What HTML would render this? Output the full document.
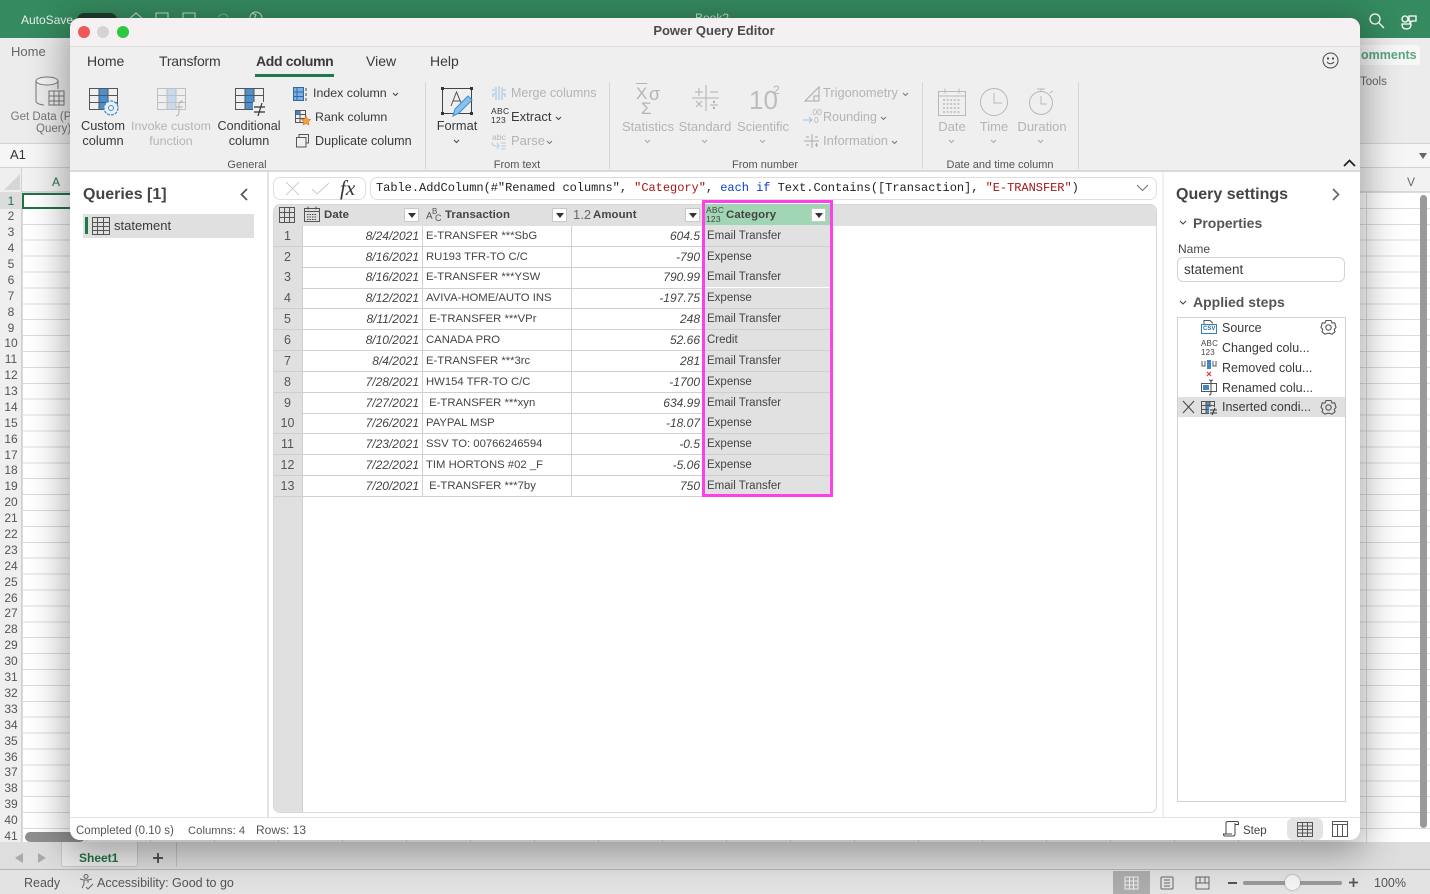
<!DOCTYPE html>
<html><head><meta charset="utf-8"><title>Power Query Editor</title>
<style>
*{box-sizing:border-box;margin:0;padding:0}
html,body{width:1430px;height:894px;overflow:hidden;background:#fff;font-family:"Liberation Sans",sans-serif;color:#333}
body{filter:blur(.3px)}
.a{position:absolute}
.t{position:absolute;white-space:nowrap;line-height:16px;font-size:13px;color:#3a3a3a}
.c{text-align:center;transform:translateX(-50%)}
.dis{color:#b4b4b4}
svg{position:absolute;overflow:visible;fill:none}
.rn{position:absolute;left:0;width:22px;text-align:center;font-size:12px;line-height:16px;color:#555}
#grid{position:absolute;left:22px;top:192px;right:0;height:650px;background-color:#fff;background-image:repeating-linear-gradient(to bottom,#dcdcdc 0,#dcdcdc 1px,transparent 1px,transparent 15.9px),repeating-linear-gradient(to right,#dcdcdc 0,#dcdcdc 1px,transparent 1px,transparent 64px)}
#win{position:absolute;left:70px;top:18px;width:1290px;height:822px;background:#fff;border-radius:10px;box-shadow:0 8px 36px 6px rgba(0,0,0,.32);overflow:hidden}
#tb{position:absolute;left:273px;top:204px;width:884px;height:609px;border:1px solid #d8d8d8;border-radius:7px;background:#fff;overflow:hidden}
.row{position:absolute;left:0;width:558px;height:20.85px;font-size:11.3px;line-height:20px;color:#444;border-bottom:1px solid #cfcfcf}
.row span{position:absolute;top:-.25px;height:20px;white-space:nowrap}
.i{left:0;width:27px;text-align:center;background:#e0e0e0;color:#555;font-size:12.5px}
.d{left:28px;width:117px;text-align:right;font-style:italic;font-size:12px}
.tr{left:152px}
.am{left:298px;width:128px;text-align:right;font-style:italic;font-size:12px}
.ca{left:429px;width:129px;background:#e1e1e1;padding-left:4px;font-size:11.5px}
.vl{position:absolute;top:21px;bottom:0;width:1px;background:#d2d2d2}
.dd{position:absolute;top:208px;width:15px;height:14px;background:#fff;border:1px solid #c9c9c9}
.dd:after{content:"";position:absolute;left:3px;top:4px;border:4px solid transparent;border-top:5px solid #333;border-bottom:0}
.h{font-size:11.4px;font-weight:bold;color:#444;letter-spacing:.1px}
</style></head><body>

<!-- Excel background -->
<div class="a" style="left:0;top:0;width:1430px;height:38px;background:#358a5f"></div>
<div class="t" style="left:21px;top:12px;color:#e6f2ea;font-size:12px">AutoSave</div>
<div class="a" style="left:77px;top:13px;width:40px;height:14px;background:#1f3d2d;border-radius:7px"></div>
<svg style="left:128px;top:10px" width="140" height="14" stroke="#bfe0cd" stroke-width="1.1"><path d="M1 9L8 3l7 6M3 8v6M13 8v6M28 3h12v11H28zM55 3h12v11H55z"/><path d="M90 7q6-6 10 0" opacity=".5"/><path d="M122 9a6 6 0 1 1 6 5M124 3l4 2-2 4"/></svg>
<div class="t" style="left:695px;top:10px;color:#c6e0d0;font-size:12px">Book2</div>
<svg style="left:1368px;top:12px" width="50" height="18" stroke="#fff" stroke-width="1.3"><circle cx="7" cy="7" r="5"/><path d="M11 11l5 5"/><path d="M34 12h9q0 5-4.500 5t-4.500-5z"/><circle cx="37" cy="7" r="3"/><path d="M41 4h7v5h-4l-2 2v-2h-1z"/></svg>

<div class="a" style="left:0;top:38px;width:1430px;height:107px;background:#ececec"></div>
<div class="t" style="left:11px;top:44px;font-size:13px;color:#666">Home</div>
<svg style="left:35px;top:76px" width="34" height="32" stroke="#777"><ellipse cx="12" cy="5" rx="11" ry="4" fill="#f4f4f4"/><path d="M1 5v20q0 3 8 4M23 5v8"/><rect x="14" y="15" width="15" height="14" fill="#eee"/><path d="M14 20h15M14 25h15M19 15v14M24 15v14"/></svg>
<div class="t c" style="left:41px;top:109px;font-size:11.500px;color:#777">Get Data (P</div>
<div class="t" style="left:36px;top:121px;font-size:11.500px;color:#777">Query)</div>
<div class="a" style="left:1358px;top:45px;width:62px;height:20px;background:#f7f7f7;border-radius:3px"></div>
<div class="t" style="left:1361px;top:47px;font-size:12.500px;font-weight:bold;color:#5ba57f">omments</div>
<div class="t" style="left:1360px;top:74px;font-size:11.500px;color:#666">Tools</div>
<div class="a" style="left:0;top:143px;width:1430px;height:25px;background:#f6f6f6;border-top:1px solid #d4d4d4;border-bottom:1px solid #d4d4d4"></div>
<div class="t" style="left:10px;top:147px;font-size:13px;color:#333">A1</div>
<div class="a" style="left:1419px;top:153px;border:4px solid transparent;border-top:6px solid #666"></div>

<div class="a" style="left:0;top:168px;width:1430px;height:24px;background:#f2f2f2;border-bottom:1px solid #d8d8d8"></div>
<div class="a" style="left:0;top:168px;width:22px;height:676px;background:#efefef;border-right:1px solid #d0d0d0"></div>
<svg style="left:4px;top:174px" width="16" height="16"><path d="M16 0v16H0z" fill="#d6d6d6"/></svg>
<div class="t" style="left:52px;top:174px;font-size:12px;color:#217346">A</div>
<div class="t" style="left:1407px;top:174px;font-size:12px;color:#666">V</div>
<div id="grid"></div>
<div class="a" style="left:22px;top:193px;width:50px;height:16px;border:2px solid #217346;background:#fff"></div>
<div class="a" style="left:0;top:192px;width:22px;height:17px;background:#dcdcdc"></div>
<div class="rn" style="top:193px;color:#217346">1</div><div class="rn" style="top:208px">2</div><div class="rn" style="top:224px">3</div><div class="rn" style="top:240px">4</div><div class="rn" style="top:256px">5</div><div class="rn" style="top:272px">6</div><div class="rn" style="top:288px">7</div><div class="rn" style="top:304px">8</div><div class="rn" style="top:320px">9</div><div class="rn" style="top:335px">10</div><div class="rn" style="top:351px">11</div><div class="rn" style="top:367px">12</div><div class="rn" style="top:383px">13</div><div class="rn" style="top:399px">14</div><div class="rn" style="top:415px">15</div><div class="rn" style="top:431px">16</div><div class="rn" style="top:447px">17</div><div class="rn" style="top:462px">18</div><div class="rn" style="top:478px">19</div><div class="rn" style="top:494px">20</div><div class="rn" style="top:510px">21</div><div class="rn" style="top:526px">22</div><div class="rn" style="top:542px">23</div><div class="rn" style="top:558px">24</div><div class="rn" style="top:574px">25</div><div class="rn" style="top:590px">26</div><div class="rn" style="top:605px">27</div><div class="rn" style="top:621px">28</div><div class="rn" style="top:637px">29</div><div class="rn" style="top:653px">30</div><div class="rn" style="top:669px">31</div><div class="rn" style="top:685px">32</div><div class="rn" style="top:701px">33</div><div class="rn" style="top:717px">34</div><div class="rn" style="top:733px">35</div><div class="rn" style="top:749px">36</div><div class="rn" style="top:764px">37</div><div class="rn" style="top:780px">38</div><div class="rn" style="top:796px">39</div><div class="rn" style="top:812px">40</div><div class="rn" style="top:828px">41</div>
<div class="a" style="left:25px;top:832px;width:60px;height:10px;background:#8f8f8f;border-radius:5px"></div>
<div class="a" style="left:1420px;top:195px;width:7px;height:633px;background:#9a9a9a;border-radius:4px"></div>

<div class="a" style="left:0;top:842px;width:1430px;height:28px;background:#dedede;border-bottom:1px solid #b5b5b5"></div>
<svg style="left:14px;top:852px" width="34" height="12"><path d="M9 1v10L1 6z" fill="#aaa"/><path d="M24 1v10l8-5z" fill="#aaa"/></svg>
<div class="a" style="left:61px;top:842px;width:77px;height:25px;background:#ececec;border:1px solid #c8c8c8;border-top:0;border-radius:0 0 3px 3px"></div>
<div class="t" style="left:79px;top:850px;font-size:12px;font-weight:bold;color:#217346">Sheet1</div>
<svg style="left:152px;top:852px" width="12" height="12" stroke="#444" stroke-width="1.700"><path d="M6 1v10M1 6h10"/></svg>
<div class="a" style="left:176px;top:842px;width:1px;height:25px;background:#c0c0c0"></div>
<div class="a" style="left:0;top:870px;width:1430px;height:24px;background:#e3e3e3"></div>
<div class="t" style="left:24px;top:875px;font-size:12.500px;color:#555">Ready</div>
<svg style="left:79px;top:874px" width="15" height="16" stroke="#666" stroke-width="1"><circle cx="7" cy="2.500" r="2"/><path d="M1 5l4 1h4l4-1M5 6v4l-2 4M9 6v3M7 13l2 2 5-5"/></svg>
<div class="t" style="left:97px;top:875px;font-size:12.500px;color:#555">Accessibility: Good to go</div>
<div class="a" style="left:1113px;top:871px;width:37px;height:23px;background:#adadad"></div>
<svg style="left:1125px;top:876px" width="100" height="14" stroke="#666" stroke-width="1"><path d="M0 1h13v12H0zM0 5h13M0 9h13M4.500 1v12M8.500 1v12" stroke="#eee"/><rect x="36" y="1" width="12" height="12" rx="1"/><path d="M39 4h6M39 7h6M39 10h6"/><path d="M71 1h13v12H71zM75 1v6h5V1M71 7h4M80 7h4"/></svg>
<div class="a" style="left:1228px;top:882px;width:9px;height:2px;background:#555"></div>
<div class="a" style="left:1243px;top:881px;width:99px;height:4px;background:#999;border-radius:2px"></div>
<div class="a" style="left:1285px;top:875px;width:15px;height:15px;background:#f5f5f5;border-radius:50%;box-shadow:0 0 2px #888"></div>
<svg style="left:1349px;top:878px" width="9" height="9" stroke="#555" stroke-width="1.700"><path d="M4.500 0v9M0 4.500h9"/></svg>
<div class="t" style="left:1374px;top:875px;font-size:12.500px;color:#555">100%</div>

<!-- Power Query window -->
<div id="win"></div>
<div class="a" style="left:70px;top:18px;width:1290px;height:29px;background:#f5f1f2;border-radius:10px 10px 0 0;border-bottom:1px solid #dcdcdc"></div>
<div class="a" style="left:78px;top:26px;width:12px;height:12px;border-radius:50%;background:#f0575a"></div>
<div class="a" style="left:97px;top:26px;width:12px;height:12px;border-radius:50%;background:#d6d2d3"></div>
<div class="a" style="left:117px;top:26px;width:12px;height:12px;border-radius:50%;background:#2cc840"></div>
<div class="t c" style="left:714px;top:23px;font-size:13px;font-weight:bold;color:#4a4a4a">Power Query Editor</div>
<div class="a" style="left:70px;top:47px;width:1290px;height:125px;background:#efefef;border-bottom:2px solid #dadada"></div>

<div class="t" style="left:87px;top:53px;font-size:14px">Home</div>
<div class="t" style="left:159px;top:53px;font-size:14px;letter-spacing:-.2px">Transform</div>
<div class="t" style="left:256px;top:53px;font-size:14px;font-weight:bold;letter-spacing:-.35px">Add column</div>
<div class="a" style="left:255px;top:74px;width:79px;height:3px;background:#1e7a4b"></div>
<div class="t" style="left:366px;top:53px;font-size:14px">View</div>
<div class="t" style="left:430px;top:53px;font-size:14px">Help</div>
<svg style="left:1322px;top:52px" width="17" height="17" stroke="#444"><circle cx="8.500" cy="8.500" r="7.500"/><path d="M5 10q3.500 3.500 7 0"/><circle cx="6" cy="6.500" r=".6" fill="#444"/><circle cx="11" cy="6.500" r=".6" fill="#444"/></svg>

<!-- separators -->
<div class="a" style="left:425px;top:82px;width:1px;height:87px;background:#d6d6d6"></div>
<div class="a" style="left:609px;top:82px;width:1px;height:87px;background:#d6d6d6"></div>
<div class="a" style="left:922px;top:82px;width:1px;height:87px;background:#d6d6d6"></div>
<div class="a" style="left:1078px;top:82px;width:1px;height:87px;background:#d6d6d6"></div>

<!-- Custom column icon -->
<svg style="left:89px;top:88px" width="32" height="28"><rect x="10" y="0" width="9" height="22" fill="#4a8fd0"/><path d="M.5.500h28v21H.5zM.5 7.500h28M.5 14.500h28M10 .5v21M19 .5v21" stroke="#555"/><circle cx="22" cy="20" r="7" fill="#efefef" stroke="#3b93d8" stroke-width="1.300" stroke-dasharray="3 1"/><circle cx="22" cy="20" r="2.500" stroke="#3b93d8"/></svg>
<div class="t c" style="left:103px;top:118px;font-size:12.800px">Custom</div><div class="t c" style="left:103px;top:133px;font-size:12.800px">column</div>
<!-- Invoke -->
<svg style="left:157px;top:88px" width="32" height="28"><rect x="10" y="0" width="9" height="22" fill="#c7d9ec"/><path d="M.5.500h28v21H.5zM.5 7.500h28M.5 14.500h28M10 .5v21M19 .5v21" stroke="#c0c0c0"/><path d="M19 28q3 0 3-5v-6q0-4 4-4M19 19h7" stroke="#b0b0b0"/></svg>
<div class="t c dis" style="left:171px;top:118px;font-size:12.400px">Invoke custom</div><div class="t c dis" style="left:171px;top:133px;font-size:12.400px">function</div>
<!-- Conditional -->
<svg style="left:235px;top:88px" width="32" height="28"><rect x="10" y="0" width="9" height="22" fill="#4a8fd0"/><path d="M.5.500h28v21H.5zM.5 7.500h28M.5 14.500h28M10 .5v21M19 .5v21" stroke="#555"/><rect x="18" y="14" width="14" height="13" fill="#efefef"/><path d="M19 19h11M19 24h11M27 15l-4 13" stroke="#333" stroke-width="1.200"/></svg>
<div class="t c" style="left:249px;top:118px;font-size:12.600px">Conditional</div><div class="t c" style="left:249px;top:133px;font-size:12.600px">column</div>
<div class="t c" style="left:247px;top:157px;font-size:11px;color:#555">General</div>

<svg style="left:293px;top:86px" width="15" height="16"><rect x=".5" y="1.500" width="10" height="13" fill="#7eb0de" stroke="#2d6aa5"/><path d="M4 1.500v13M.5 6h10M.5 10.500h10" stroke="#2d6aa5"/><path d="M13 2v3M13 7v3M13 12v3" stroke="#444"/></svg>
<div class="t" style="left:313px;top:85px;font-size:12.400px">Index column</div>
<svg style="left:392px;top:92px" width="7" height="5" stroke="#444"><path d="M1 1l2.500 2.500L6 1"/></svg>
<svg style="left:295px;top:110px" width="16" height="16"><path d="M.5.500h10v12H.5zM.5 4.500h10M.5 8.500h10M5 .5v12" stroke="#555"/><rect x="1" y="1" width="4" height="3.500" fill="#3f86c8"/><path d="M11 6l1.500 3 3 .5-2.200 2.200.6 3.300L11 13.500 8.100 15l.6-3.300L6.500 9.500l3-.5z" fill="#f2a241" stroke="#d8721e" stroke-width=".6"/></svg>
<div class="t" style="left:315px;top:109px;font-size:12.400px">Rank column</div>
<svg style="left:296px;top:134px" width="15" height="14" stroke="#555"><path d="M3 3V.5h9.500V9H10"/><rect x=".5" y="3.500" width="9.500" height="9.500"/></svg>
<div class="t" style="left:315px;top:133px;font-size:12.600px">Duplicate column</div>

<!-- Format -->
<svg style="left:441px;top:87px" width="34" height="30"><path d="M1.500 1.500h29v25h-29z" stroke="#444"/><rect x="0" y="0" width="3" height="3" fill="#333"/><rect x="29" y="0" width="3" height="3" fill="#333"/><rect x="0" y="25" width="3" height="3" fill="#333"/><rect x="29" y="25" width="3" height="3" fill="#333"/><path d="M10 19l5.500-14 5 12M12 14h7" stroke="#555"/><path d="M12 29l2-7L27 9l4 4-13 13z" fill="#8cc1ec" stroke="#3b8ed0"/></svg>
<div class="t c" style="left:457px;top:118px;font-size:12.800px">Format</div>
<svg style="left:453px;top:139px" width="7" height="5" stroke="#444"><path d="M1 1l2.500 2.500L6 1"/></svg>

<svg style="left:491px;top:85px" width="16" height="16" stroke="#9dbfdc"><path d="M5 2v13M8 1v14M11 2v13M1 5h3M15 5h-3M2 12V9h2M14 12V9h-2"/></svg>
<div class="t dis" style="left:511px;top:85px;font-size:12.500px">Merge columns</div>
<div class="t" style="left:491px;top:107px;font-size:8.500px;line-height:9px;color:#333;letter-spacing:.3px">ABC<br>123</div>
<div class="t" style="left:511px;top:109px;font-size:13px">Extract</div>
<svg style="left:555px;top:116px" width="7" height="5" stroke="#444"><path d="M1 1l2.500 2.500L6 1"/></svg>
<div class="t dis" style="left:492px;top:133px;font-size:8.500px;line-height:9px">abc</div>
<svg style="left:491px;top:141px" width="16" height="9" stroke="#b5cfe4"><path d="M1 1q0 4 4 4h3M6 2l2 3-2 3M10 2h5M10 5h5M10 8h5"/></svg>
<div class="t dis" style="left:511px;top:133px;font-size:13px">Parse</div>
<svg style="left:546px;top:140px" width="7" height="5" stroke="#777"><path d="M1 1l2.500 2.500L6 1"/></svg>
<div class="t c" style="left:517px;top:157px;font-size:11px;color:#555">From text</div>

<!-- Statistics -->
<div class="t" style="left:636px;top:85px;font-size:17px;line-height:18px;color:#b4b4b4;text-decoration:overline">X</div>
<div class="t" style="left:649px;top:85px;font-size:18px;line-height:18px;color:#b4b4b4">σ</div>
<div class="t" style="left:641px;top:100px;font-size:17px;line-height:18px;color:#b4b4b4">Σ</div>
<div class="t c dis" style="left:648px;top:119px">Statistics</div>
<svg style="left:644px;top:139px" width="7" height="5" stroke="#aaa"><path d="M1 1l2.500 2.500L6 1"/></svg>
<svg style="left:692px;top:85px" width="28" height="28" stroke="#b0b0b0"><path d="M14 0v26M0 13h27M3 7h8M7 3v8M18 7h8M4 16l6 6M10 16l-6 6M18 20h8"/><circle cx="22" cy="17" r=".7" fill="#aaa"/><circle cx="22" cy="23" r=".7" fill="#aaa"/></svg>
<div class="t c dis" style="left:705px;top:119px">Standard</div>
<svg style="left:701px;top:139px" width="7" height="5" stroke="#aaa"><path d="M1 1l2.500 2.500L6 1"/></svg>
<div class="t" style="left:749px;top:86px;font-size:26px;line-height:28px;color:#bdbdbd">10</div>
<div class="t" style="left:773px;top:82px;font-size:12px;color:#b4b4b4">2</div>
<div class="t c dis" style="left:763px;top:119px">Scientific</div>
<svg style="left:759px;top:139px" width="7" height="5" stroke="#aaa"><path d="M1 1l2.500 2.500L6 1"/></svg>
<svg style="left:804px;top:86px" width="16" height="16" stroke="#aaa"><path d="M1 15L15 1v14zM10 15v-5h5"/></svg>
<div class="t dis" style="left:823px;top:85px;font-size:12.800px">Trigonometry</div>
<svg style="left:902px;top:92px" width="7" height="5" stroke="#777"><path d="M1 1l2.500 2.500L6 1"/></svg>
<div class="t" style="left:810px;top:108px;font-size:8.500px;line-height:9px;color:#b4b4b4">.00</div>
<svg style="left:803px;top:116px" width="10" height="8" stroke="#9dc3e4"><path d="M0 4h9M6 1l3 3-3 3"/></svg>
<div class="t" style="left:814px;top:116px;font-size:8.500px;line-height:9px;color:#b4b4b4">0</div>
<div class="t dis" style="left:823px;top:109px;font-size:12.600px">Rounding</div>
<svg style="left:880px;top:116px" width="7" height="5" stroke="#777"><path d="M1 1l2.500 2.500L6 1"/></svg>
<svg style="left:804px;top:134px" width="15" height="14" stroke="#aaa"><path d="M8 0v14M0 7h15M2 3h3M2 11h3M11 3h3M11 11h3M12.500 9v4"/></svg>
<div class="t dis" style="left:823px;top:133px;font-size:13px">Information</div>
<svg style="left:891px;top:140px" width="7" height="5" stroke="#777"><path d="M1 1l2.500 2.500L6 1"/></svg>
<div class="t c" style="left:765px;top:157px;font-size:11px;color:#555">From number</div>

<!-- Date/time -->
<svg style="left:938px;top:88px" width="28" height="28" stroke="#b8b8b8"><rect x=".5" y="3.500" width="27" height="24"/><path d="M.5 8h27M7 .5v5M21 .5v5"/><path d="M5 12h18M5 16h18M5 20h18M5 24h18" stroke-dasharray="2 1.600" stroke-width="1.400"/></svg>
<div class="t c dis" style="left:952px;top:119px">Date</div>
<svg style="left:948px;top:139px" width="7" height="5" stroke="#aaa"><path d="M1 1l2.500 2.500L6 1"/></svg>
<svg style="left:980px;top:88px" width="28" height="28" stroke="#b8b8b8"><circle cx="14" cy="14" r="13.500"/><path d="M14 5v10h8"/></svg>
<div class="t c dis" style="left:994px;top:119px">Time</div>
<svg style="left:990px;top:139px" width="7" height="5" stroke="#aaa"><path d="M1 1l2.500 2.500L6 1"/></svg>
<svg style="left:1029px;top:88px" width="26" height="28" stroke="#b8b8b8"><circle cx="12" cy="15" r="11.500"/><path d="M8 1h8M12 1v3M12 8v8h6M21 5l3-2"/></svg>
<div class="t c dis" style="left:1042px;top:119px">Duration</div>
<svg style="left:1037px;top:139px" width="7" height="5" stroke="#aaa"><path d="M1 1l2.500 2.500L6 1"/></svg>
<div class="t c" style="left:1000px;top:157px;font-size:11px;color:#555">Date and time column</div>
<svg style="left:1343px;top:159px" width="13" height="8" stroke="#222" stroke-width="1.800"><path d="M1 7l5.500-5.500L12 7"/></svg>

<!-- Queries pane -->
<div class="a" style="left:267px;top:172px;width:2px;height:645px;background:#e4e4e4"></div>
<div class="t" style="left:83px;top:186px;font-size:16px;line-height:18px;font-weight:bold;color:#444">Queries [1]</div>
<svg style="left:240px;top:188px" width="8" height="13" stroke="#555" stroke-width="1.700"><path d="M7 1L1.500 6.500 7 12"/></svg>
<div class="a" style="left:83px;top:214px;width:171px;height:24px;background:#e0e0e0"></div>
<div class="a" style="left:85px;top:217px;width:3px;height:17px;background:#1e7a4b"></div>
<svg style="left:92px;top:217px" width="18" height="18" stroke="#555"><path d="M.5.500h17v17H.5zM.5 5.500h17M.5 9.500h17M.5 13.500h17M5.500 .5v17M11.500 .5v17"/></svg>
<div class="t" style="left:114px;top:218px;font-size:13px">statement</div>

<!-- Formula bar -->
<div class="a" style="left:273px;top:177px;width:93px;height:23px;border:1px solid #dedede;border-radius:7px;background:#fff"></div>
<svg style="left:285px;top:181px" width="46" height="14" stroke="#cfcfcf" stroke-width="1.100"><path d="M1 1l13 13M14 1L1 14M27 8l5 5 12-11"/></svg>
<div class="t" style="left:340px;top:179px;font-family:'Liberation Serif',serif;font-style:italic;font-size:21px;line-height:18px;color:#333">fx</div>
<div class="a" style="left:370px;top:177px;width:787px;height:23px;border:1px solid #dedede;border-radius:7px;background:#fff"></div>
<div class="t" style="left:376px;top:180px;font-family:'Liberation Mono',monospace;font-size:12px;color:#222;letter-spacing:-.03px">Table.AddColumn(#"Renamed columns", <span style="color:#a31515">"Category"</span>, <span style="color:#0b3fd6">each</span> <span style="color:#0b3fd6">if</span> Text.Contains([Transaction], <span style="color:#a31515">"E-TRANSFER"</span>)</div>
<svg style="left:1136px;top:184px" width="13" height="8" stroke="#777" stroke-width="1.100"><path d="M1 1l5.500 5.500L12 1"/></svg>

<!-- Table -->
<div id="tb">
<div class="a" style="left:0;top:0;width:884px;height:21px;background:#e0e0e0"></div>
<div class="a" style="left:0;top:21px;width:28px;height:587px;background:#e0e0e0"></div>
<div class="row" style="top:21px"><span class="i">1</span><span class="d">8/24/2021</span><span class="tr">E-TRANSFER ***SbG</span><span class="am">604.5</span><span class="ca">Email Transfer</span></div>
<div class="row" style="top:41.850px"><span class="i">2</span><span class="d">8/16/2021</span><span class="tr">RU193 TFR-TO C/C</span><span class="am">-790</span><span class="ca">Expense</span></div>
<div class="row" style="top:62.700px"><span class="i">3</span><span class="d">8/16/2021</span><span class="tr">E-TRANSFER ***YSW</span><span class="am">790.99</span><span class="ca">Email Transfer</span></div>
<div class="row" style="top:83.550px"><span class="i">4</span><span class="d">8/12/2021</span><span class="tr">AVIVA-HOME/AUTO INS</span><span class="am">-197.75</span><span class="ca">Expense</span></div>
<div class="row" style="top:104.400px"><span class="i">5</span><span class="d">8/11/2021</span><span class="tr">&nbsp;E-TRANSFER ***VPr</span><span class="am">248</span><span class="ca">Email Transfer</span></div>
<div class="row" style="top:125.250px"><span class="i">6</span><span class="d">8/10/2021</span><span class="tr">CANADA PRO</span><span class="am">52.66</span><span class="ca">Credit</span></div>
<div class="row" style="top:146.100px"><span class="i">7</span><span class="d">8/4/2021</span><span class="tr">E-TRANSFER ***3rc</span><span class="am">281</span><span class="ca">Email Transfer</span></div>
<div class="row" style="top:166.950px"><span class="i">8</span><span class="d">7/28/2021</span><span class="tr">HW154 TFR-TO C/C</span><span class="am">-1700</span><span class="ca">Expense</span></div>
<div class="row" style="top:187.800px"><span class="i">9</span><span class="d">7/27/2021</span><span class="tr">&nbsp;E-TRANSFER ***xyn</span><span class="am">634.99</span><span class="ca">Email Transfer</span></div>
<div class="row" style="top:208.650px"><span class="i">10</span><span class="d">7/26/2021</span><span class="tr">PAYPAL MSP</span><span class="am">-18.07</span><span class="ca">Expense</span></div>
<div class="row" style="top:229.500px"><span class="i">11</span><span class="d">7/23/2021</span><span class="tr">SSV TO: 00766246594</span><span class="am">-0.5</span><span class="ca">Expense</span></div>
<div class="row" style="top:250.350px"><span class="i">12</span><span class="d">7/22/2021</span><span class="tr">TIM HORTONS #02 _F</span><span class="am">-5.06</span><span class="ca">Expense</span></div>
<div class="row" style="top:271.200px"><span class="i">13</span><span class="d">7/20/2021</span><span class="tr">&nbsp;E-TRANSFER ***7by</span><span class="am">750</span><span class="ca">Email Transfer</span></div>
<div class="vl" style="left:28px;bottom:0;background:#cfcfcf"></div>
<div class="vl" style="left:148px;height:271px;bottom:auto"></div>
<div class="vl" style="left:297px;height:271px;bottom:auto"></div>
</div>
<div class="a" style="left:702px;top:204px;width:130px;height:21px;background:#a0d6b4"></div>
<svg style="left:279px;top:207px" width="16" height="16" stroke="#555"><path d="M.5.500h15v15H.5zM.5 5.500h15M.5 10.500h15M5.500 .5v15M10.500 .5v15"/></svg>
<svg style="left:304px;top:206px" width="16" height="16" stroke="#555"><rect x=".5" y="2.500" width="15" height="13" /><path d="M.5 5.500h15M4 .5v3M12 .5v3"/><path d="M3 8.500h10M3 11h10M3 13.500h10" stroke="#444" stroke-dasharray="1.500 1"/></svg>
<div class="t h" style="left:324px;top:207px">Date</div>
<div class="dd" style="left:404px"></div>
<div class="t" style="left:426px;top:212px;font-size:10px;line-height:10px;color:#555">A</div>
<div class="t" style="left:432px;top:207px;font-size:8px;line-height:9px;color:#555">B</div>
<div class="t" style="left:435px;top:214px;font-size:9px;line-height:9px;color:#555">C</div>
<div class="t h" style="left:445px;top:207px">Transaction</div>
<div class="dd" style="left:552px"></div>
<div class="t" style="left:573px;top:207px;font-size:13px;color:#666">1.2</div>
<div class="t h" style="left:593px;top:207px">Amount</div>
<div class="dd" style="left:685px"></div>
<div class="t" style="left:706px;top:206px;font-size:8.500px;line-height:9px;color:#444;letter-spacing:.2px">ABC<br>123</div>
<div class="t h" style="left:726px;top:207px">Category</div>
<div class="dd" style="left:811px"></div>
<div class="a" style="left:702px;top:200px;width:131px;height:297px;border:3px solid #ff3fe9"></div>

<!-- Query settings -->
<div class="a" style="left:1162px;top:172px;width:2px;height:645px;background:#f0f0f0"></div>
<div class="t" style="left:1176px;top:186px;font-size:16px;line-height:18px;font-weight:bold;color:#444">Query settings</div>
<svg style="left:1332px;top:188px" width="8" height="13" stroke="#666" stroke-width="1.700"><path d="M1 1l5.500 5.500L1 12"/></svg>
<svg style="left:1179px;top:220px" width="8" height="6" stroke="#444" stroke-width="1.100"><path d="M1 1l3 3 3-3"/></svg>
<div class="t" style="left:1193px;top:215px;font-size:14px;font-weight:bold;color:#555">Properties</div>
<div class="t" style="left:1178px;top:241px;font-size:12px;color:#444">Name</div>
<div class="a" style="left:1177px;top:257px;width:168px;height:25px;border:1px solid #d4d4d4;border-radius:6px;background:#fff"></div>
<div class="t" style="left:1184px;top:262px;font-size:13.500px">statement</div>
<svg style="left:1179px;top:300px" width="8" height="6" stroke="#444" stroke-width="1.100"><path d="M1 1l3 3 3-3"/></svg>
<div class="t" style="left:1193px;top:294px;font-size:14px;font-weight:bold;color:#555">Applied steps</div>
<div class="a" style="left:1177px;top:317px;width:169px;height:485px;border:1px solid #d2d2d2;background:#fff"></div>
<div class="a" style="left:1178px;top:397px;width:167px;height:20px;background:#e0e0e0"></div>
<svg style="left:1201px;top:320px" width="16" height="14"><path d="M3 4V.5h6l3 3" stroke="#555"/><rect x=".5" y="4.500" width="15" height="9" fill="#fff" stroke="#2f7fc1"/></svg>
<div class="t" style="left:1203px;top:325px;font-size:6px;line-height:9px;font-weight:bold;color:#2f6a9c">CSV</div>
<div class="t" style="left:1222px;top:320px;font-size:12.500px">Source</div>
<div class="t" style="left:1201px;top:339px;font-size:8px;line-height:9px;color:#444;letter-spacing:.2px">ABC<br>123</div>
<div class="t" style="left:1222px;top:340px;font-size:12.500px">Changed colu...</div>
<svg style="left:1201px;top:360px" width="16" height="16"><path d="M1 1v5h3V1M12 1v5h3V1" stroke="#555"/><rect x="6" y="0" width="4" height="9" fill="#3f86c8"/><path d="M6 12l4 4M10 12l-4 4" stroke="#d33" stroke-width="1.200"/></svg>
<div class="t" style="left:1222px;top:360px;font-size:12.500px">Removed colu...</div>
<svg style="left:1201px;top:379px" width="16" height="16"><rect x=".5" y="4.500" width="15" height="8" stroke="#555"/><rect x="2" y="6" width="6" height="5" fill="#3f86c8"/><path d="M8 1q2 0 2 2v11q0 2-2 2M12 1q-2 0-2 2" stroke="#444"/></svg>
<div class="t" style="left:1222px;top:380px;font-size:12.500px">Renamed colu...</div>
<svg style="left:1183px;top:401px" width="11" height="12" stroke="#444"><path d="M0 0l11 12M11 0L0 12"/></svg>
<svg style="left:1201px;top:400px" width="16" height="15"><rect x="5" y="1" width="4" height="12" fill="#4a8fd0"/><path d="M.5 1.500h13v12H.5zM.5 5.500h13M.5 9.500h13M5 1.500v12M9 1.500v12" stroke="#555"/><rect x="8" y="7" width="8" height="8" fill="#e0e0e0"/><path d="M9 10h7M9 13h7M14 8l-3 7" stroke="#333"/></svg>
<div class="t" style="left:1222px;top:399px;font-size:12.500px">Inserted condi...</div>
<svg style="left:1320px;top:319px" width="17" height="17" stroke="#555" stroke-width="1.100"><path d="M6 1.500h5l1 2.500 2.700-.2L16 8.500l-1.700 1.800 .7 2.500-3 2.500-2.500-1H7.500l-2.500 1-3-2.500 .7-2.500L1 8.500l1.300-4.700L5 4z"/><circle cx="8.500" cy="8.500" r="2.700"/></svg>
<svg style="left:1320px;top:399px" width="17" height="17" stroke="#555" stroke-width="1.100"><path d="M6 1.500h5l1 2.500 2.700-.2L16 8.500l-1.700 1.800 .7 2.500-3 2.500-2.500-1H7.500l-2.500 1-3-2.500 .7-2.500L1 8.500l1.300-4.700L5 4z"/><circle cx="8.500" cy="8.500" r="2.700"/></svg>

<!-- Status -->
<div class="a" style="left:70px;top:817px;width:1290px;height:1px;background:#e4e4e4"></div>
<div class="t" style="left:76px;top:823px;font-size:11.500px;color:#555">Completed (0.10 s)</div>
<div class="t" style="left:188px;top:823px;font-size:11.300px;color:#555">Columns: 4</div>
<div class="t" style="left:256px;top:822px;font-size:12px;color:#555">Rows: 13</div>
<svg style="left:1223px;top:821px" width="16" height="16" stroke="#444"><path d="M3 13V2q0-1.500 2-1.500h9q1.500 0 1.500 1.500v1.500H12V2M12 2v11q0 2-2 2H2q-1.500 0-1.500-1.500V13H9"/></svg>
<div class="t" style="left:1243px;top:823px;font-size:11.500px;color:#444">Step</div>
<div class="a" style="left:1287px;top:818px;width:36px;height:22px;background:#e3e3e3;border-radius:6px"></div>
<svg style="left:1297px;top:822px" width="16" height="15" stroke="#555"><path d="M.5.500h15v14H.5zM.5 4h15M.5 7.500h15M.5 11h15M5.500 .5v14M10.500 .5v14"/></svg>
<svg style="left:1332px;top:821px" width="16" height="16" stroke="#555"><path d="M.5.500h15v15H.5zM.5 3.500h15M5.500 3.500v12M10.500 3.500v12"/></svg>
</body></html>
